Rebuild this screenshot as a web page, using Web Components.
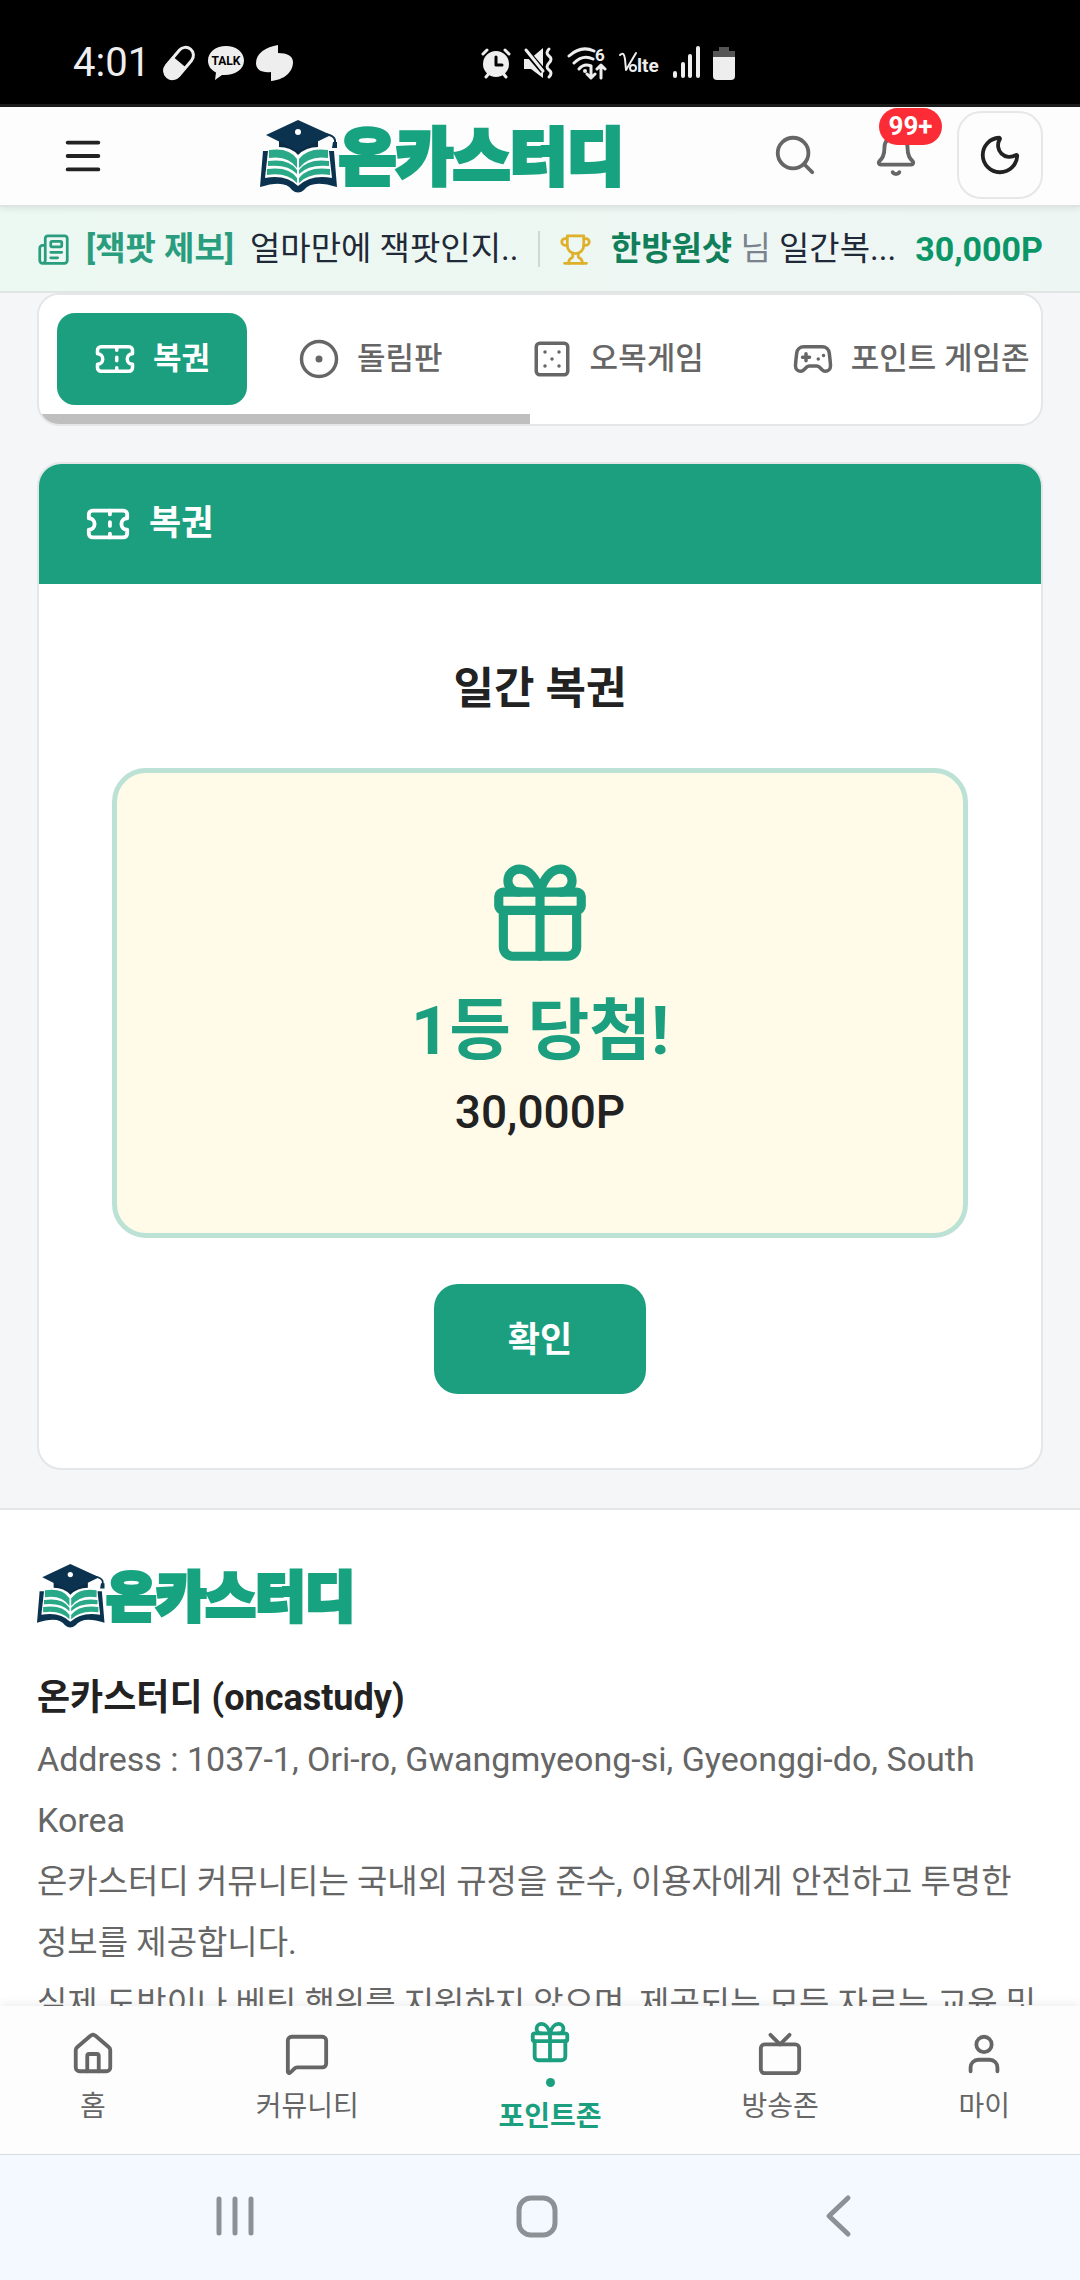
<!DOCTYPE html>
<html lang="ko">
<head>
<meta charset="UTF-8">
<meta name="viewport" content="width=device-width, initial-scale=1">
<title>온카스터디 - 복권</title>
<style>
    :root {
        --primary: #1c9f7f;
        --text: #222;
        --muted: #666;
        --line: #e4e6e8;
        --page: #f4f6f8;
    }
    body {
        margin: 0;
        height: 100vh;
        display: flex;
        flex-direction: column;
        overflow: hidden;
        background: var(--page);
        color: var(--text);
        font-family: Roboto, 'Noto Sans CJK KR', sans-serif;
    }
    main {
        flex: 1;
        min-height: 0;
        overflow: hidden;
    }
    .address { font-size: 34px; }
</style>
</head>
<body>
    <status-bar></status-bar>
    <app-header></app-header>
    <news-ticker></news-ticker>
    <main>
        <tab-strip>
            <tab-item icon="ticket" active>복권</tab-item>
            <tab-item icon="wheel">돌림판</tab-item>
            <tab-item icon="dice">오목게임</tab-item>
            <tab-item icon="gamepad">포인트 게임존</tab-item>
        </tab-strip>
        <game-card icon="ticket">
            <span slot="heading">복권</span>
            <span slot="title">일간 복권</span>
            <prize-box>
                <span slot="rank">1등 당첨!</span>
                <span slot="amount">30,000P</span>
            </prize-box>
            <span slot="action">확인</span>
        </game-card>
        <site-footer>
            <span slot="name">온카스터디 (oncastudy)</span>
            <p class="address">Address : 1037-1, Ori-ro, Gwangmyeong-si, Gyeonggi-do, South Korea</p>
            <p>온카스터디 커뮤니티는 국내외 규정을 준수, 이용자에게 안전하고 투명한 정보를 제공합니다.</p>
            <p>실제 도박이나 베팅 행위를 지원하지 않으며, 제공되는 모든 자료는 교육 및</p>
        </site-footer>
    </main>
    <bottom-nav>
        <nav-item icon="home">홈</nav-item>
        <nav-item icon="message">커뮤니티</nav-item>
        <nav-item icon="gift" active>포인트존</nav-item>
        <nav-item icon="tv">방송존</nav-item>
        <nav-item icon="user">마이</nav-item>
    </bottom-nav>
    <system-bar></system-bar>

<script>
// Outline icons, all on a 24x24 grid
const ICONS = {
    menu: '<path d="M4 5h16M4 12h16M4 19h16"/>',
    search: '<circle cx="11" cy="11" r="8"/><path d="m21 21-4.3-4.3"/>',
    bell: '<path d="M10.268 21a2 2 0 0 0 3.464 0"/><path d="M3.262 15.326A1 1 0 0 0 4 17h16a1 1 0 0 0 .74-1.673C19.41 13.956 18 12.499 18 8A6 6 0 0 0 6 8c0 4.499-1.411 5.956-2.738 7.326"/>',
    moon: '<path d="M20.985 12.486a9 9 0 1 1-9.473-9.472c.405-.022.617.46.402.803a6 6 0 0 0 8.268 8.268c.344-.215.825-.004.803.401"/>',
    news: '<path d="M15 18h-5M18 14h-8"/><path d="M4 22h16a2 2 0 0 0 2-2V4a2 2 0 0 0-2-2H8a2 2 0 0 0-2 2v16a2 2 0 0 1-4 0v-9a2 2 0 0 1 2-2h2"/><rect x="10" y="6" width="8" height="4" rx="1"/>',
    trophy: '<path d="M6 9H4.500a2.500 2.500 0 0 1 0-5H6M18 9h1.500a2.500 2.500 0 0 0 0-5H18M4 22h16"/><path d="M10 14.660V17c0 .550-.470.980-.970 1.210C7.850 18.750 7 20.240 7 22M14 14.660V17c0 .550.470.980.970 1.210C16.150 18.750 17 20.240 17 22"/><path d="M18 2H6v7a6 6 0 0 0 12 0V2Z"/>',
    ticket: '<path d="M2 9a3 3 0 0 1 0 6v2a2 2 0 0 0 2 2h16a2 2 0 0 0 2-2v-2a3 3 0 0 1 0-6V7a2 2 0 0 0-2-2H4a2 2 0 0 0-2 2Z"/><path d="M13 5v2M13 17v2M13 11v2"/>',
    wheel: '<circle cx="12" cy="12" r="10"/><circle cx="12" cy="12" r="1"/>',
    dice: '<rect x="3" y="3" width="18" height="18" rx="2"/><path d="M16 8h.01M8 8h.01M8 16h.01M16 16h.01M12 12h.01"/>',
    gamepad: '<path d="M6 11h4M8 9v4M15 12h.01M18 10h.01"/><path d="M17.320 5H6.680a4 4 0 0 0-3.978 3.590c-.006.052-.010.101-.017.152C2.604 9.416 2 14.456 2 16a3 3 0 0 0 3 3c1 0 1.500-.500 2-1l1.414-1.414A2 2 0 0 1 9.828 16h4.344a2 2 0 0 1 1.414.586L17 18c.500.500 1 1 2 1a3 3 0 0 0 3-3c0-1.545-.604-6.584-.685-7.258-.007-.050-.011-.100-.017-.151A4 4 0 0 0 17.320 5z"/>',
    gift: '<path d="M12 7v14"/><path d="M20 11v8a2 2 0 0 1-2 2H6a2 2 0 0 1-2-2v-8"/><path d="M7.5 7a1 1 0 0 1 0-5A4.8 8 0 0 1 12 7a4.8 8 0 0 1 4.5-5 1 1 0 0 1 0 5"/><rect x="3" y="7" width="18" height="4" rx="1"/>',
    home: '<path d="M15 21v-8a1 1 0 0 0-1-1h-4a1 1 0 0 0-1 1v8"/><path d="M3 10a2 2 0 0 1 .709-1.528l7-6a2 2 0 0 1 2.582 0l7 6A2 2 0 0 1 21 10v9a2 2 0 0 1-2 2H5a2 2 0 0 1-2-2z"/>',
    message: '<path d="M22 17a2 2 0 0 1-2 2H6.828a2 2 0 0 0-1.414.586l-2.202 2.202A.71.71 0 0 1 2 21.286V5a2 2 0 0 1 2-2h16a2 2 0 0 1 2 2z"/>',
    tv: '<path d="m17 2-5 5-5-5"/><rect x="2" y="7" width="20" height="15" rx="2"/>',
    user: '<path d="M19 21v-2a4 4 0 0 0-4-4H9a4 4 0 0 0-4 4v2"/><circle cx="12" cy="7" r="4"/>'
};

function define(name, html, setup) {
    const template = document.createElement('template');
    template.innerHTML = html;
    customElements.define(name, class extends HTMLElement {
        constructor() {
            super();
            this.attachShadow({ mode: 'open' });
            this.shadowRoot.appendChild(template.content.cloneNode(true));
        }
        connectedCallback() {
            if (setup) setup(this, this.shadowRoot);
        }
    });
}

define('line-icon', `
    <style>
        :host { display: block; flex: none; width: var(--size, 46px); height: var(--size, 46px); }
        svg {
            display: block;
            width: 100%;
            height: 100%;
            fill: none;
            stroke: currentColor;
            stroke-width: 2;
            stroke-linecap: round;
            stroke-linejoin: round;
        }
    </style>
    <svg viewBox="0 0 24 24" aria-hidden="true"></svg>
`, (el, root) => {
    root.querySelector('svg').innerHTML = ICONS[el.getAttribute('name')];
});

define('brand-logo', `
    <style>
        :host { display: block; --h: 73px; --font: 62px; }
        :host([small]) { --h: 64px; --font: 54px; }
        a { display: flex; width: fit-content; align-items: center; gap: 2px; height: var(--h); text-decoration: none; }
        svg { height: var(--h); flex: none; }
        span {
            padding-bottom: 5px;
            font-family: 'Noto Sans CJK KR', sans-serif;
            font-weight: 900;
            font-size: var(--font);
            line-height: var(--h);
            color: #18a380;
            white-space: nowrap;
            -webkit-text-stroke: 4px #18a380;
            text-shadow: 1px 1px 1px #23735f;
        }
    </style>
    <a href="#">
        <svg viewBox="0 0 77 73" aria-hidden="true">
            <path d="M3 31 8 31 5 58Q26 54 38 66Q51 54 72 58L69 31 74 31 77 67Q52 59 44 70Q38 75 32 70Q25 59 0 67Z" fill="#0b3350"/>
            <g fill="#2aa988">
                <path d="M9 30Q29 27 37 39V48Q28 35 9 38Z"/>
                <path d="M8 41Q29 38 37 50V54Q28 44 8 46Z"/>
                <path d="M7 49Q29 46 37 58V63Q27 52 7 55Z"/>
                <path d="M68 30Q48 27 39 39V48Q49 35 68 38Z"/>
                <path d="M69 41Q48 38 39 50V54Q49 44 69 46Z"/>
                <path d="M70 49Q48 46 39 58V63Q50 52 70 55Z"/>
            </g>
            <path d="M19 19V27Q31 27 38 35Q46 27 58 27V19Z" fill="#0b2b45"/>
            <path d="M38 0 71 15 38 31 6 15Z" fill="#0b3350"/>
            <path d="M64 14Q74 15 75 20V24" fill="none" stroke="#0b3350" stroke-width="2"/>
            <path d="M73 22h4v6h-5z" fill="#0b3350"/>
            <circle cx="38" cy="12" r="3" fill="#fff"/>
        </svg>
        <span>온카스터디</span>
    </a>
`);

define('status-bar', `
    <style>
        :host {
            display: flex;
            align-items: center;
            flex: none;
            box-sizing: border-box;
            height: 107px;
            padding: 22px 73px 0;
            background: #000;
            border-bottom: 3px solid #1c1c1c;
            color: #eee;
        }
        time { font-size: 40px; line-height: 40px; }
        div { display: flex; align-items: center; }
        .apps { gap: 12px; margin-left: 12px; }
        .system { gap: 12px; margin-left: 188px; }
        svg { display: block; height: 36px; fill: currentColor; }
        .line { fill: none; stroke: currentColor; stroke-width: 3; stroke-linecap: round; stroke-linejoin: round; }
        text { font-weight: 700; }
    </style>
    <time>4:01</time>
    <div class="apps">
        <svg viewBox="0 0 34 36" aria-hidden="true">
            <g transform="rotate(40 17 18)"><rect x="9" y="0" width="16" height="36" rx="8" class="line"/><path d="M8 17h18v11a9 9 0 0 1-18 0Z"/></g>
        </svg>
        <svg viewBox="0 0 36 36" aria-hidden="true">
            <path d="M18 1C8 1 0 7 0 15.500C0 21 3 25 8 27.500L7 35 14 30C26 31 36 25 36 15.500C36 7 28 1 18 1Z"/>
            <text x="18" y="20" font-size="12" text-anchor="middle" fill="#000">TALK</text>
        </svg>
        <svg viewBox="0 0 37 36" aria-hidden="true"><path d="M22 0V8C31 8 37 11 37 17C37 28 27 35 15 36V27C6 28 0 25 0 18C0 8 10 2 22 0Z"/></svg>
    </div>
    <div class="system">
        <svg viewBox="0 0 30 36" aria-hidden="true">
            <circle cx="15" cy="19" r="13"/><path d="M2 9 6 5M28 9 24 5M5 32 9 27M25 32 21 27" class="line"/>
            <path d="M15 12V20H21" class="line" style="stroke:#000"/>
        </svg>
        <svg viewBox="0 0 32 36" aria-hidden="true">
            <path d="M1 14H7L20 3V33L8 24H1Z"/><path d="M2 5 20 26" stroke="#000" stroke-width="6"/>
            <path d="M3 5 20 26M26 4Q22 8 26 11T26 18T26 25T26 32" class="line"/>
        </svg>
        <svg viewBox="0 0 40 36" aria-hidden="true">
            <path d="M2 11Q14 0 27 6M7 18Q16 9 26 14M12 24Q17 18 24 21M24 21V32M20 29 24 33 28 29M34 33V20M30 24 34 20 38 24" class="line"/>
            <circle cx="18" cy="26" r="2"/><text x="28" y="16" font-size="17">6</text>
        </svg>
        <svg viewBox="0 0 42 36" aria-hidden="true">
            <path d="M1 10Q5 6 6 14L7 25 17 8" class="line" style="stroke-width:2"/>
            <circle cx="14" cy="23" r="3" class="line" style="stroke-width:2"/>
            <text x="18" y="27" font-size="19" font-weight="900">lte</text>
        </svg>
        <svg viewBox="0 0 28 36" aria-hidden="true"><path d="M2 28V31M10 19V31M17 11V31M25 3V31" class="line" style="stroke-width:4"/></svg>
        <svg viewBox="0 0 22 36" aria-hidden="true">
            <path d="M6 2H16V6H22V14H0V6H6Z" fill="#555"/><path d="M0 12H22V31Q22 35 18 35H4Q0 35 0 31Z"/>
        </svg>
    </div>
`);

define('app-header', `
    <style>
        :host {
            position: relative;
            z-index: 2;
            display: flex;
            align-items: center;
            justify-content: space-between;
            flex: none;
            height: 98px;
            padding: 0 37px;
            background: #fdfdfd;
            border-bottom: 2px solid #dfe4e3;
            box-shadow: 0 2px 6px rgba(0,0,0,0.08);
        }
        button {
            position: relative;
            display: grid;
            place-items: center;
            box-sizing: border-box;
            width: 80px;
            height: 88px;
            padding: 0;
            border: 0;
            background: none;
            color: var(--muted);
        }
        .menu { width: 92px; color: var(--text); }
        .theme { width: 86px; border: 2px solid #e6e7e8; border-radius: 24px; color: var(--text); }
        .actions { display: flex; gap: 21px; padding-bottom: 2px; }
        .badge {
            position: absolute;
            top: -3px;
            right: -6px;
            width: 63px;
            border-radius: 19px;
            background: #fb2c36;
            color: #fff;
            font: 700 26px/37px Roboto, sans-serif;
        }
    </style>
    <button class="menu" aria-label="메뉴"><line-icon name="menu"></line-icon></button>
    <brand-logo></brand-logo>
    <div class="actions">
        <button aria-label="검색"><line-icon name="search"></line-icon></button>
        <button aria-label="알림"><line-icon name="bell"></line-icon><span class="badge">99+</span></button>
        <button class="theme" aria-label="다크 모드"><line-icon name="moon"></line-icon></button>
    </div>
`);

define('news-ticker', `
    <style>
        :host {
            display: flex;
            align-items: center;
            justify-content: space-between;
            flex: none;
            height: 84px;
            padding: 0 37px;
            background: linear-gradient(to right, #ecf8f2, #eef6f3);
            border-bottom: 2px solid #e1e5e4;
            font-size: 33px;
            line-height: 48px;
            white-space: nowrap;
        }
        line-icon { --size: 33px; }
        a { display: flex; align-items: center; color: #1f2937; text-decoration: none; }
        .post { gap: 16px; }
        .win { gap: 19px; }
        .tag { color: #2a9d7e; font-weight: 700; }
        i { width: 2px; height: 36px; background: #cfd8d5; }
        .post line-icon { color: #2a9d7e; }
        .win line-icon { color: #dfb02a; }
        b { color: #11805a; font-weight: 700; }
        .nim { color: #7b828c; }
        strong { color: #0b9668; font-size: 34px; }
    </style>
    <a class="post" href="#"><line-icon name="news"></line-icon><span class="tag">[잭팟 제보]</span><span>얼마만에 잭팟인지..</span></a>
    <i></i>
    <a class="win" href="#"><line-icon name="trophy"></line-icon><span><b>한방원샷</b> <span class="nim">님</span> 일간복...</span><strong>30,000P</strong></a>
`);

define('tab-strip', `
    <style>
        :host {
            display: block;
            margin: 0 37px;
            background: #fff;
            border: 2px solid var(--line);
            border-radius: 22px;
            overflow: hidden;
        }
        nav { display: flex; gap: 14px; padding: 18px 18px 9px; overflow: hidden; }
        /* scroll indicator under the row */
        .thumb { width: 49%; height: 10px; background: #bfbfbf; }
    </style>
    <nav><slot></slot></nav>
    <div class="thumb"></div>
`);

define('tab-item', `
    <style>
        :host { display: block; flex: none; }
        button {
            display: flex;
            align-items: center;
            gap: 17px;
            height: 92px;
            padding: 0 37px;
            border: 0;
            border-radius: 18px;
            background: none;
            color: var(--muted);
            font: 500 31px/44px Roboto, 'Noto Sans CJK KR', sans-serif;
            white-space: nowrap;
        }
        :host([active]) button { background: var(--primary); color: #fff; font-weight: 700; }
        line-icon { --size: 42px; }
    </style>
    <button><line-icon></line-icon><slot></slot></button>
`, (el, root) => {
    root.querySelector('line-icon').setAttribute('name', el.getAttribute('icon'));
    root.querySelector('line-icon').connectedCallback();
});

define('game-card', `
    <style>
        :host {
            display: block;
            margin: 36px 37px 38px;
            background: #fff;
            border: 2px solid var(--line);
            border-radius: 24px;
            overflow: hidden;
        }
        h2 {
            display: flex;
            align-items: center;
            gap: 18px;
            height: 120px;
            margin: 0;
            padding: 0 46px;
            background: var(--primary);
            color: #fff;
            font-size: 35px;
            line-height: 50px;
        }
        .body {
            display: flex;
            flex-direction: column;
            align-items: stretch;
            padding: 75px 73px 74px;
        }
        h3 { margin: 0 0 49px; font-size: 44px; line-height: 60px; text-align: center; }
        button {
            align-self: center;
            height: 110px;
            margin-top: 46px;
            padding: 4px 74px 0;
            border: 0;
            border-radius: 24px;
            background: var(--primary);
            color: #fff;
            font: 700 35px/50px Roboto, 'Noto Sans CJK KR', sans-serif;
        }
    </style>
    <h2><line-icon name="ticket"></line-icon><slot name="heading"></slot></h2>
    <div class="body">
        <h3><slot name="title"></slot></h3>
        <slot></slot>
        <button><slot name="action"></slot></button>
    </div>
`);

define('prize-box', `
    <style>
        :host {
            display: flex;
            flex-direction: column;
            align-items: center;
            padding: 87px 20px 93px;
            border: 5px solid #bce1d5;
            border-radius: 34px;
            background: #fffbe8;
        }
        line-icon { --size: 110px; color: var(--primary); }
        .rank { margin-top: 22px; color: var(--primary); font-size: 67px; font-weight: 700; line-height: 78px; }
        .amount { margin-top: 14px; font-size: 46px; font-weight: 500; line-height: 56px; }
    </style>
    <line-icon name="gift"></line-icon>
    <div class="rank"><slot name="rank"></slot></div>
    <div class="amount"><slot name="amount"></slot></div>
`);

define('site-footer', `
    <style>
        :host {
            display: block;
            padding: 54px 37px;
            background: #fff;
            border-top: 2px solid var(--line);
            color: var(--muted);
            font-size: 33px;
            line-height: 61px;
        }
        .name { margin-top: 40px; color: var(--text); font-size: 36px; font-weight: 700; }
        ::slotted(p) { margin: 0; }
    </style>
    <brand-logo small></brand-logo>
    <div class="name"><slot name="name"></slot></div>
    <slot></slot>
`);

define('bottom-nav', `
    <style>
        :host {
            position: relative;
            z-index: 2;
            display: block;
            flex: none;
            background: #fdfdfd;
            box-shadow: 0 -2px 10px rgba(0,0,0,0.08);
        }
        nav { display: flex; align-items: center; justify-content: space-around; height: 143px; padding-bottom: 5px; }
    </style>
    <nav><slot></slot></nav>
`);

define('nav-item', `
    <style>
        :host { display: block; }
        a {
            display: flex;
            flex-direction: column;
            align-items: center;
            gap: 12px;
            color: var(--muted);
            font-size: 28px;
            line-height: 36px;
            text-decoration: none;
        }
        i { display: none; width: 9px; height: 9px; border-radius: 50%; background: currentColor; }
        :host([active]) a { color: var(--primary); font-weight: 700; }
        :host([active]) i { display: block; }
    </style>
    <a href="#"><line-icon></line-icon><i></i><span><slot></slot></span></a>
`, (el, root) => {
    root.querySelector('line-icon').setAttribute('name', el.getAttribute('icon'));
    root.querySelector('line-icon').connectedCallback();
});

define('system-bar', `
    <style>
        :host {
            position: relative;
            z-index: 3;
            display: grid;
            grid-template-columns: repeat(3, 1fr);
            align-items: center;
            flex: none;
            box-sizing: border-box;
            height: 126px;
            padding: 0 90px 4px 84px;
            background: #f4f9ff;
            border-top: 1px solid #d3dde3;
        }
        button { display: grid; place-items: center; padding: 0; border: 0; background: none; }
        svg { width: 44px; height: 44px; fill: none; stroke: #8c9196; stroke-width: 5; stroke-linecap: round; stroke-linejoin: round; }
    </style>
    <button aria-label="최근 앱"><svg viewBox="0 0 44 44"><path d="M6 5V39M22 5V39M38 5V39"/></svg></button>
    <button aria-label="홈 화면"><svg viewBox="0 0 44 44"><rect x="4" y="4" width="36" height="37" rx="12"/></svg></button>
    <button aria-label="뒤로"><svg viewBox="0 0 44 44"><path d="M31 4 12 22 31 40"/></svg></button>
`);
</script>
</body>
</html>
